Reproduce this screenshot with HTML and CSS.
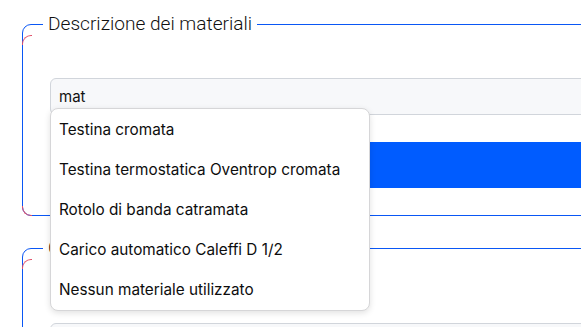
FILE: index.html
```html
<!DOCTYPE html>
<html lang="it">
<head>
<meta charset="utf-8">
<title>Materiali</title>
<link rel="stylesheet" href="styles.css">
</head>
<body>
<main class="page">
  <fieldset class="group">
    <legend class="group-title">Descrizione dei materiali</legend>
    <div class="combo">
      <input class="field" type="text" value="mat">
      <ul class="menu">
        <li class="menu-item">Testina cromata</li>
        <li class="menu-item">Testina termostatica Oventrop cromata</li>
        <li class="menu-item">Rotolo di banda catramata</li>
        <li class="menu-item">Carico automatico Caleffi D 1/2</li>
        <li class="menu-item">Nessun materiale utilizzato</li>
      </ul>
    </div>
    <button class="add-btn" type="button"></button>
  </fieldset>
  <fieldset class="group group-second">
    <legend class="group-title">Commenti</legend>
    <input class="field" type="text">
  </fieldset>
</main>
</body>
</html>
```
FILE: styles.css
```css
html, body {
  margin: 0;
  padding: 0;
  overflow: hidden;
  background: #ffffff;
}
.page {
  padding: 12px 0 0 22px;
  width: 900px;
  font-family: "Inter", "Liberation Sans", sans-serif;
  color: #111;
}
.group {
  position: relative;
  margin: 0;
  padding: 42px 27px 27px 27px;
  border: 1px solid #0a57f5;
  border-radius: 9px;
  min-width: 0;
}
.group::before,
.group::after {
  content: "";
  position: absolute;
  left: -1px;
  width: 9px;
  height: 9px;
  border-left: 1px solid #e0506a;
  pointer-events: none;
}
.group::before {
  top: -1px;
  border-top: 1px solid #e0506a;
  border-top-left-radius: 9px;
}
.group::after {
  bottom: -1px;
  border-bottom: 1px solid #e0506a;
  border-bottom-left-radius: 9px;
}
.group-second {
  margin-top: 20px;
  padding-top: 63px;
}
.group-title {
  margin-left: -7px;
  padding: 0 5px;
  font-family: "Roboto", "Liberation Sans", sans-serif;
  font-size: 19.1px;
  line-height: 24px;
  font-weight: 300;
  color: #111;
}
.combo {
  position: relative;
}
.field {
  display: block;
  box-sizing: border-box;
  width: 100%;
  height: 37px;
  margin: 0;
  padding: 0 8px;
  border: 1px solid #d1d5db;
  border-radius: 6px;
  background: #f7f8fa;
  font-family: "Inter", "Liberation Sans", sans-serif;
  font-size: 15px;
  color: #111;
  outline: none;
}
.menu {
  position: absolute;
  top: 30px;
  left: 0;
  z-index: 2;
  box-sizing: border-box;
  width: 320px;
  margin: 0;
  padding: 1px 0 0 0;
  list-style: none;
  background: #ffffff;
  border: 1px solid #d6d6d8;
  border-radius: 8px;
  box-shadow: 0 2px 6px rgba(0, 0, 0, 0.12);
}
.menu-item {
  height: 40px;
  line-height: 40px;
  padding: 0 8px;
  font-size: 15.3px;
  color: #0d0d0d;
  white-space: nowrap;
}
.add-btn {
  display: block;
  width: 100%;
  height: 46px;
  margin: 27px 0 0 0;
  border: 0;
  border-radius: 0;
  background: #005cff;
}
```
